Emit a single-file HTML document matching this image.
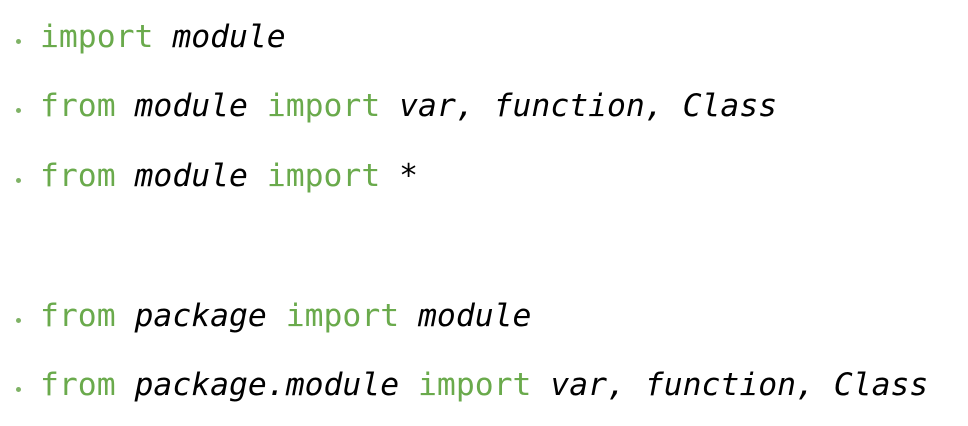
<!DOCTYPE html>
<html><head><meta charset="utf-8"><style>
body{margin:0;width:968px;height:426px;background:#fff;position:relative;overflow:hidden;font-family:"DejaVu Sans Mono","Liberation Mono",monospace;}
.l{position:absolute;left:40px;font-size:31.4px;line-height:40px;white-space:pre;color:#000;}
.k{color:#6aaa4c;}
.i{font-style:italic;}
.b{position:absolute;left:16px;width:5px;height:5px;border-radius:50%;background:#7fb266;}
</style></head><body>
<div class="b" style="top:39px"></div><div class="l" style="top:17px"><span class="k">import</span> <span class="i">module</span></div>
<div class="b" style="top:108px"></div><div class="l" style="top:86px"><span class="k">from</span> <span class="i">module</span> <span class="k">import</span> <span class="i">var, function, Class</span></div>
<div class="b" style="top:178px"></div><div class="l" style="top:156px"><span class="k">from</span> <span class="i">module</span> <span class="k">import</span> <span class="i">*</span></div>
<div class="b" style="top:318px"></div><div class="l" style="top:296px"><span class="k">from</span> <span class="i">package</span> <span class="k">import</span> <span class="i">module</span></div>
<div class="b" style="top:387px"></div><div class="l" style="top:365px"><span class="k">from</span> <span class="i">package.module</span> <span class="k">import</span> <span class="i">var, function, Class</span></div>
</body></html>
